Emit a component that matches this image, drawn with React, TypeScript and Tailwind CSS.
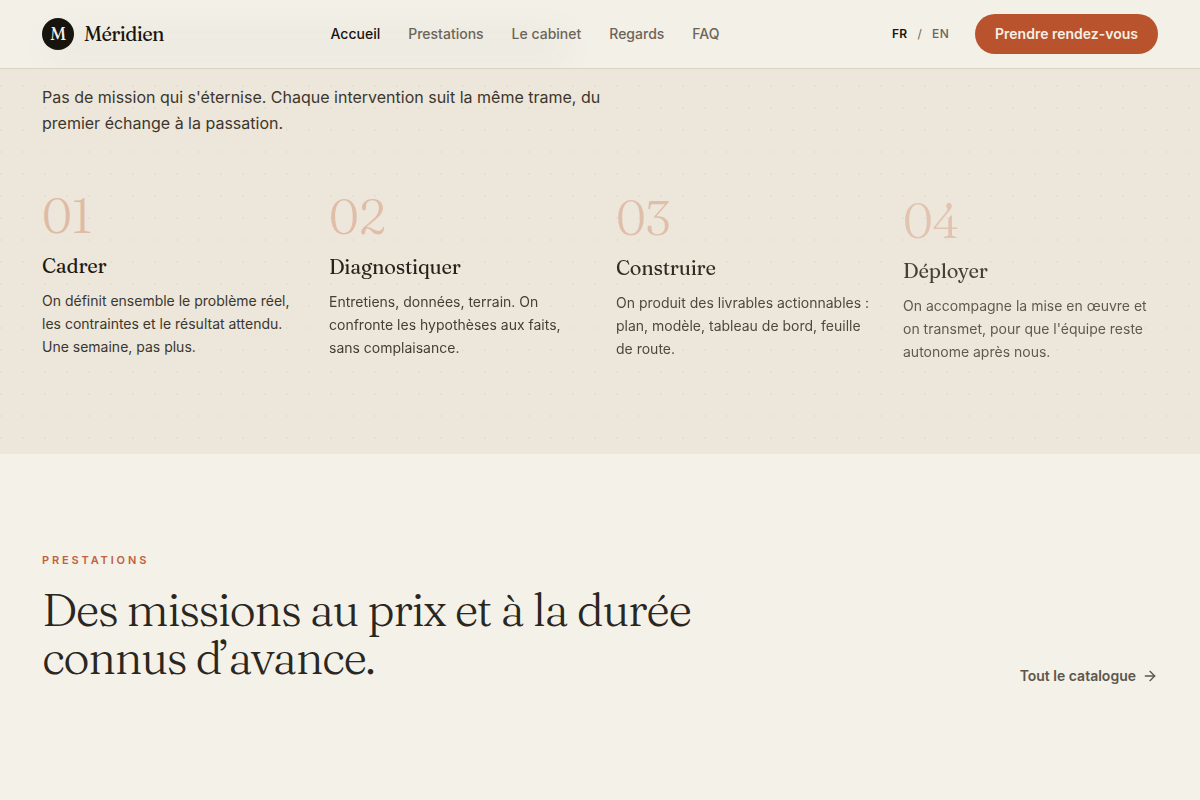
import React from 'react';
import { ArrowRight } from 'lucide-react';

interface NavItem {
  label: string;
  href: string;
  active?: boolean;
}

interface Step {
  number: string;
  title: string;
  text: string;
  reveal: string;
}

const NAV_ITEMS: NavItem[] = [
  { label: 'Accueil', href: '#accueil', active: true },
  { label: 'Prestations', href: '#prestations' },
  { label: 'Le cabinet', href: '#cabinet' },
  { label: 'Regards', href: '#regards' },
  { label: 'FAQ', href: '#faq' }
];

const STEPS: Step[] = [
  {
    number: '01',
    title: 'Cadrer',
    text: "On définit ensemble le problème réel, les contraintes et le résultat attendu. Une semaine, pas plus.",
    reveal: 'opacity-100'
  },
  {
    number: '02',
    title: 'Diagnostiquer',
    text: 'Entretiens, données, terrain. On confronte les hypothèses aux faits, sans complaisance.',
    reveal: 'opacity-95 translate-y-px'
  },
  {
    number: '03',
    title: 'Construire',
    text: "On produit des livrables actionnables\u00a0: plan, modèle, tableau de bord, feuille de route.",
    reveal: 'opacity-90 translate-y-0.5'
  },
  {
    number: '04',
    title: 'Déployer',
    text: "On accompagne la mise en œuvre et on transmet, pour que l'équipe reste autonome après nous.",
    reveal: 'opacity-80 translate-y-[5px]'
  }
];

const SERIF = "font-['Fraunces','Liberation_Serif',serif]";

function Header() {
  return (
    <header className="sticky top-0 z-10 border-b border-[#dbd3c2] bg-[#f3f0e8]">
      <div aria-hidden="true" className="absolute inset-0 overflow-hidden">
        <div className="absolute left-12 top-8 h-7 w-[520px] rounded-full bg-[#14120d]/4 blur-lg" />
      </div>

      <div className="relative flex h-[68px] items-center justify-between px-[42px]">
        <a href="#accueil" className="flex items-center gap-2.5 text-[#17140e]">
          <span className={`${SERIF} flex size-8 items-center justify-center rounded-full bg-[#17140e] text-lg text-[#f4f0e8]`}>
            M
          </span>
          <span className={`${SERIF} text-xl font-medium tracking-[-0.03em]`}>Méridien</span>
        </a>

        <nav className="flex gap-7 text-sm font-medium">
          {NAV_ITEMS.map((item) => (
            <a
              key={item.label}
              href={item.href}
              className={item.active ? 'text-[#17140e]' : 'text-[#6d6557] hover:text-[#17140e]'}
            >
              {item.label}
            </a>
          ))}
        </nav>

        <div className="flex items-center gap-5">
          <div className="flex gap-2.5 px-1.5 text-xs tracking-wide">
            <button type="button" className="font-semibold text-[#17140e]">FR</button>
            <span className="text-[#6d6557]">/</span>
            <button type="button" className="font-medium text-[#6d6557]">EN</button>
          </div>
          <a
            href="#rendez-vous"
            className="flex h-10 items-center rounded-full bg-[#b8532d] px-5 text-sm font-semibold text-[#f6efe4]"
          >
            Prendre rendez-vous
          </a>
        </div>
      </div>
    </header>
  );
}

function MethodSection() {
  return (
    <section className="bg-[#ede6da] bg-[radial-gradient(circle_at_1px_1px,#e7dfd3_1px,transparent_0)] bg-[length:22px_22px] bg-[position:0_16px] px-[42px] pb-24 pt-[15px]">
      <p className="max-w-[580px] text-base leading-[26px] text-[#3b372d]">
        Pas de mission qui s'éternise. Chaque intervention suit la même trame, du premier échange à la passation.
      </p>

      <div className="mt-14 grid grid-cols-4 gap-8">
        {STEPS.map((step) => (
          <article key={step.number} className={step.reveal}>
            <div className={`${SERIF} text-5xl font-light leading-[48px] tracking-[-0.01em] text-[#dfbba5]`}>
              {step.number}
            </div>
            <h3 className={`${SERIF} mt-3 text-xl font-medium leading-7 tracking-[-0.01em] text-[#1c1912]`}>
              {step.title}
            </h3>
            <p className="mt-[9px] text-sm leading-[23px] text-[#3b372d]">{step.text}</p>
          </article>
        ))}
      </div>
    </section>
  );
}

function ServicesSection() {
  return (
    <section className="flex items-end justify-between px-[42px] pb-24 pt-24">
      <div className="max-w-[720px] pb-1">
        <p className="text-[11px] font-semibold uppercase leading-5 tracking-[0.26em] text-[#c0613e]">Prestations</p>
        <h2 className={`${SERIF} mt-4 text-[46px] font-light leading-[48px] tracking-[-0.03em] text-[#2a2721]`}>
          Des missions au prix et à la durée connus d’avance.
        </h2>
      </div>
      <a href="#catalogue" className="flex items-center gap-1.5 text-sm font-semibold leading-5 text-[#5c574c]">
        Tout le catalogue
        <ArrowRight size={16} />
      </a>
    </section>
  );
}

export default function App() {
  return (
    <div className="min-h-screen bg-[#f4f1e9] font-['Inter',sans-serif]">
      <Header />
      <main>
        <MethodSection />
        <ServicesSection />
      </main>
    </div>
  );
}
